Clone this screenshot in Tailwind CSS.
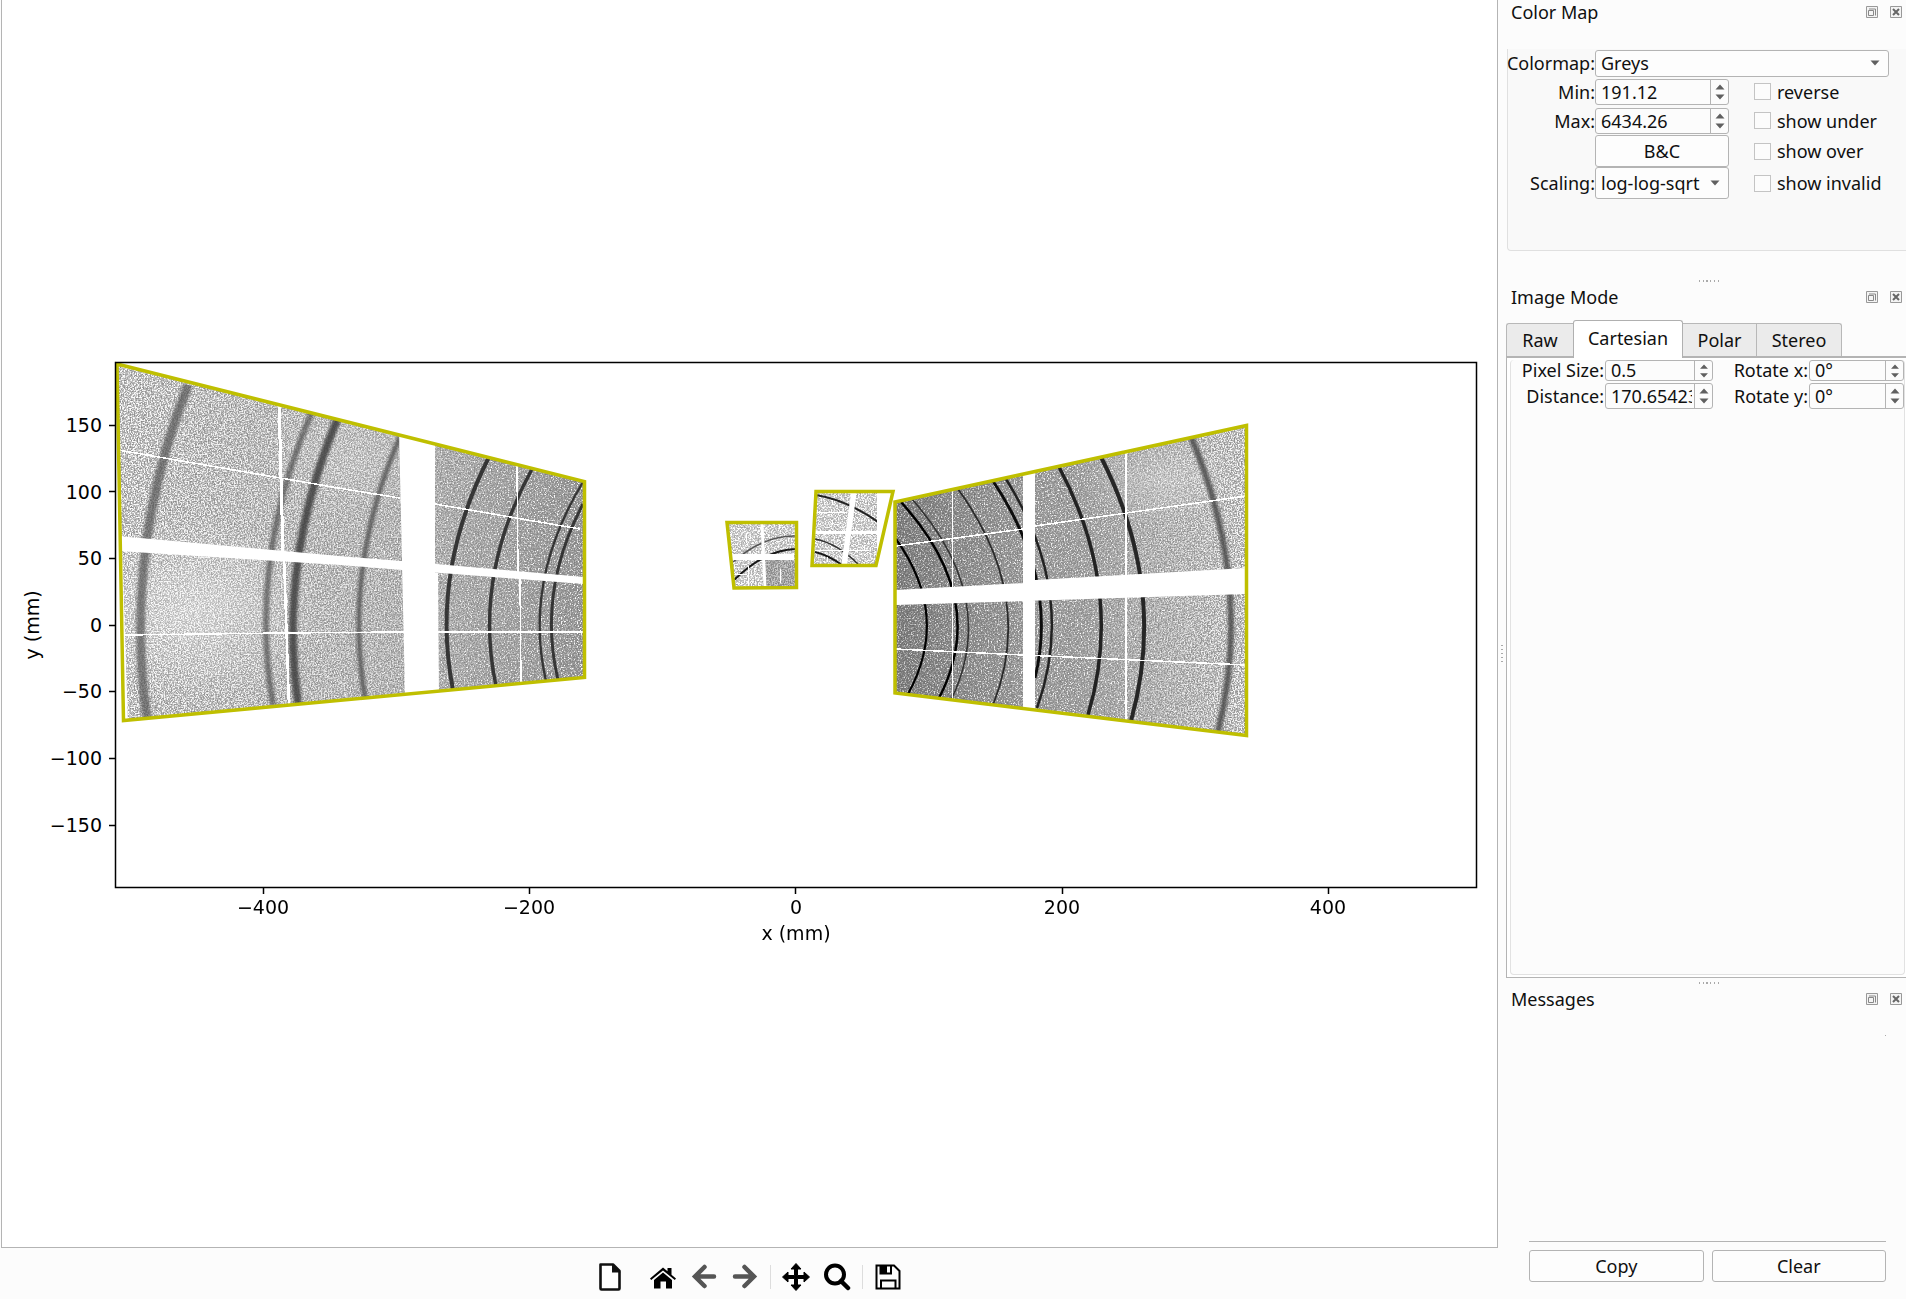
<!DOCTYPE html>
<html lang="en">
<head>
<meta charset="utf-8">
<title>Detector Viewer</title>
<script src="https://cdn.jsdelivr.net/npm/@tailwindcss/browser@4"></script>
</head>
<body class="flex h-screen overflow-hidden bg-[#fcfcfc] font-['Noto_Sans',sans-serif] text-[18px] leading-6 text-[#101010]">

<!-- Shared icon shapes -->
<svg class="hidden" aria-hidden="true">
  <symbol id="float" viewBox="0 0 12 12"><path d="M.5.5h11v11H.5z" fill="#f4f4f4" stroke="#999"/><path d="M3 3h6.500v6.500M2.500 4.500h5v5h-5z" fill="none" stroke="#888"/></symbol>
  <symbol id="close" viewBox="0 0 12 12"><path d="M.5.5h11v11H.5z" fill="#f4f4f4" stroke="#999"/><path d="M3 3l6 6M9 3l-6 6" stroke="#666" stroke-width="2"/></symbol>
  <symbol id="spin" viewBox="0 0 10 16"><path d="M.5 5.500L5 .5l4.500 5zM.5 10.500L5 15.500l4.500-5z" fill="#606060"/></symbol>
  <symbol id="drop" viewBox="0 0 10 6"><path d="M.5.5L5 5.500 9.500.5z" fill="#606060"/></symbol>
  <symbol id="grip" viewBox="0 0 21 2"><path d="M0 1h1m3 0h1m2 0h2m2 0h1m3 0h1m3 0h1" stroke="#aaa" stroke-width="2"/></symbol>
</svg>

<main class="flex min-w-0 flex-1 flex-col">
  <section class="ml-px min-h-0 flex-1 border-r border-b border-l border-[#b4b4b4] bg-white">
    <svg class="block h-full w-full" viewBox="2 0 1495 1247" role="img" aria-label="Detector images in Cartesian view">
      <defs>
        <filter id="noiseLight" x="0" y="0" width="1" height="1" color-interpolation-filters="sRGB">
          <feTurbulence type="fractalNoise" baseFrequency="0.7" numOctaves="3" seed="4"/>
          <feColorMatrix values="1 0 0 0 0  1 0 0 0 0  1 0 0 0 0  0 0 0 0 1"/>
          <feComponentTransfer>
            <feFuncR type="table" tableValues=".5 .5 .55 .63 .75 .98 1 1 1"/>
            <feFuncG type="table" tableValues=".5 .5 .55 .63 .75 .98 1 1 1"/>
            <feFuncB type="table" tableValues=".5 .5 .55 .63 .75 .98 1 1 1"/>
          </feComponentTransfer>
        </filter>
        <filter id="noiseDark" x="0" y="0" width="1" height="1" color-interpolation-filters="sRGB">
          <feTurbulence type="fractalNoise" baseFrequency="0.7" numOctaves="3" seed="9"/>
          <feColorMatrix values="1 0 0 0 0  1 0 0 0 0  1 0 0 0 0  0 0 0 0 1"/>
          <feComponentTransfer>
            <feFuncR type="table" tableValues=".42 .45 .5 .54 .58 .74 1 1 1"/>
            <feFuncG type="table" tableValues=".42 .45 .5 .54 .58 .74 1 1 1"/>
            <feFuncB type="table" tableValues=".42 .45 .5 .54 .58 .74 1 1 1"/>
          </feComponentTransfer>
        </filter>
        <filter id="soft" x="-20%" y="-5%" width="140%" height="110%"><feGaussianBlur stdDeviation="1.8 0"/></filter>
        <filter id="fine" x="-20%" y="-5%" width="140%" height="110%"><feGaussianBlur stdDeviation=".7 0"/></filter>
        <linearGradient id="fadeL"><stop offset="0" stop-color="#fff"/><stop offset=".55" stop-color="#aaa"/><stop offset=".68" stop-color="#777"/><stop offset="1" stop-color="#000"/></linearGradient>
        <linearGradient id="fadeR"><stop offset="0" stop-color="#000"/><stop offset=".5" stop-color="#222"/><stop offset=".66" stop-color="#666"/><stop offset="1" stop-color="#fff"/></linearGradient>
        <linearGradient id="shadeR"><stop offset="0" stop-opacity=".16"/><stop offset=".4" stop-opacity="0"/></linearGradient>
        <radialGradient id="glow"><stop offset="0" stop-color="#fff" stop-opacity=".38"/><stop offset="1" stop-color="#fff" stop-opacity="0"/></radialGradient>
        <mask id="maskL"><path d="M115 360h471v362H115z" fill="url(#fadeL)"/></mask>
        <mask id="maskR"><path d="M895 425h352v312H895z" fill="url(#fadeR)"/></mask>
        <clipPath id="clipL"><path d="M117 363L584 481V677L124 720z"/></clipPath>
        <clipPath id="clipA"><path d="M728 522H796V588H734z"/></clipPath>
        <clipPath id="clipB"><path d="M816 491H877V550L875 565H812z"/></clipPath>
        <clipPath id="clipR"><path d="M895 502L1246 426V736L895 693z"/></clipPath>
      </defs>

      <!-- Left panel -->
      <g clip-path="url(#clipL)">
        <rect x="115" y="360" width="471" height="362" filter="url(#noiseDark)"/>
        <g mask="url(#maskL)"><rect x="115" y="360" width="471" height="362" filter="url(#noiseLight)"/></g>
        <ellipse cx="195" cy="610" rx="125" ry="95" fill="url(#glow)"/>
        <ellipse cx="355" cy="460" rx="90" ry="60" fill="url(#glow)" opacity=".4"/>
        <g fill="none" filter="url(#soft)">
          <path d="M188 385Q123 551 147 718" stroke="#555" stroke-width="9" opacity=".72"/>
          <path d="M312 412Q248 559 273 705" stroke="#555" stroke-width="6" opacity=".75"/>
          <path d="M337 420Q278 562 298 703" stroke="#3c3c3c" stroke-width="8" opacity=".85"/>
          <path d="M400 437Q343 567 365 698" stroke="#555" stroke-width="5" opacity=".85"/>
        </g>
        <g fill="none" stroke="#2c2c2c" filter="url(#fine)" opacity=".9">
          <path d="M489 457Q430 574 453 690" stroke-width="4"/>
          <path d="M532 469Q473 577 496 686" stroke-width="3.500"/>
          <path d="M583 482Q523 581 546 681" stroke-width="2.400"/>
          <path d="M583 504Q537 591 558 680" stroke-width="3"/>
        </g>
        <g fill="#fff">
          <path d="M118 536L350 557 402 561 584 577V584L402 570 340 565 118 551z"/>
          <path d="M399 430L405 695H439L438 573H435V440z"/>
          <path d="M119 540L122 545 128 722H121z"/>
        </g>
        <g fill="none" stroke="#fff" shape-rendering="crispEdges">
          <path d="M118 450L350 490 400 498M435 504L580 529M124 635L283 633 403 632H584" stroke-width="1.500"/>
          <path d="M279 400L283 553" stroke-width="3"/><path d="M284 556L289 706" stroke-width="2.500"/>
          <path d="M517 464L518 574M520 576L521 685" stroke-width="1.500"/>
        </g>
      </g>

      <!-- Small centre panels -->
      <g clip-path="url(#clipA)">
        <rect x="725" y="520" width="73" height="70" filter="url(#noiseLight)"/>
        <path d="M725 520h73v70h-73z" fill="#fff" opacity=".2"/>
        <path d="M763 559h33v30h-33z" opacity=".2"/>
        <path d="M733 562Q764 535 796 536" fill="none" stroke="#555" stroke-width="1.500"/>
        <path d="M734 580Q764 550 796 549" fill="none" stroke="#181818" stroke-width="2"/>
        <g stroke="#fff" fill="none"><path d="M731 557h63" stroke-width="6"/><path d="M762 523L765 588" stroke-width="3"/><path d="M734 574.500h13M779.500 524v5M746.500 533v10M748.500 566v20M780.500 569v14"/></g>
      </g>
      <g clip-path="url(#clipB)">
        <rect x="810" y="490" width="70" height="77" filter="url(#noiseLight)"/>
        <path d="M810 490h70v77h-70z" fill="#fff" opacity=".2"/>
        <g fill="none"><path d="M816 495Q847 500 878 522" stroke="#222" stroke-width="2"/>
          <path d="M815 539Q837 543 859 565" stroke="#333" stroke-width="1.500"/><path d="M815 552Q828 555 842 565" stroke="#181818" stroke-width="2"/></g>
        <g stroke="#fff" fill="none"><path d="M812 532.500h66" stroke-width="3"/><path d="M854 491L844 566" stroke-width="5.500"/><path d="M816 512.500h31M815 550.500h54M832.500 500v5M832.500 520v5M827.500 557v5M864.500 545v4"/></g>
      </g>

      <!-- Right panel -->
      <g clip-path="url(#clipR)">
        <rect x="895" y="425" width="352" height="312" filter="url(#noiseDark)"/>
        <g mask="url(#maskR)"><rect x="895" y="425" width="352" height="312" filter="url(#noiseLight)"/></g>
        <path d="M895 425h352v312H895z" fill="url(#shadeR)"/>
        <ellipse cx="1160" cy="480" rx="80" ry="45" fill="url(#glow)" opacity=".6"/>
        <g fill="none" stroke="#000" filter="url(#fine)">
          <path d="M896 539Q951 616 908 694" stroke-width="2.200"/>
          <path d="M901 502Q990 600 939 698" stroke-width="2.500"/>
          <path d="M912 499Q999 598 952 698" stroke="#333" stroke-width="1.600"/>
          <path d="M958 489Q1036 597 993 705" stroke="#2a2a2a" stroke-width="1.800"/>
          <path d="M993 481Q1059 580 1035 678" stroke="#111" stroke-width="3"/>
          <path d="M1006 479Q1078 594 1037 708" stroke="#222" stroke-width="2.500"/>
          <path d="M1059 467Q1125 591 1088 715" stroke="#222" stroke-width="3.500"/>
          <path d="M1101 457Q1168 589 1131 721" stroke="#282828" stroke-width="4"/>
        </g>
        <path d="M1191 437Q1254 585 1218 732" fill="none" stroke="#484848" stroke-width="6" opacity=".85" filter="url(#soft)"/>
        <path d="M896 590L1023 583 1035 580 1246 568V594L896 605zM1023 460h12v255h-12z" fill="#fff"/>
        <g fill="none" stroke="#fff" shape-rendering="crispEdges">
          <path d="M896 546L1023 529M1035 526L1246 496M896 649L1023 655 1246 665" stroke-width="1.500"/>
          <path d="M952.500 480v230"/><path d="M1126 440v285" stroke-width="2"/>
        </g>
      </g>

      <!-- Panel outlines -->
      <g fill="none" stroke="#bfbf00" stroke-width="3.500">
        <path d="M117 364L584.500 481.500V677.500L123.500 720.500z"/>
        <path d="M727 522.500H796.500V587.500L734 588z"/>
        <path d="M816 491.500H893L876 565.500H812z"/>
        <path d="M895 502L1246.500 425.500V735.500L895 693z"/>
      </g>

      <!-- Axes -->
      <g fill="none" stroke="#000" stroke-width="1.500">
        <path d="M115.500 362.500H1476.500V887.500H115.500z"/>
        <path d="M263.500 888v6M529.500 888v6M795.500 888v6M1062.500 888v6M1328.500 888v6M115 425.500h-6M115 491.500h-6M115 558.500h-6M115 625.500h-6M115 691.500h-6M115 758.500h-6M115 825.500h-6"/>
      </g>
      <g class="font-['DejaVu_Sans',sans-serif] text-[19px]" fill="#000">
        <g text-anchor="middle">
          <text x="263" y="914">−400</text><text x="529" y="914">−200</text><text x="796" y="914">0</text><text x="1062" y="914">200</text><text x="1328" y="914">400</text>
          <text x="796" y="940">x (mm)</text>
          <text transform="translate(39 625) rotate(-90)">y (mm)</text>
        </g>
        <g text-anchor="end">
          <text x="102" y="432">150</text><text x="102" y="499">100</text><text x="102" y="565">50</text><text x="102" y="632">0</text><text x="102" y="698">−50</text><text x="102" y="765">−100</text><text x="102" y="832">−150</text>
        </g>
      </g>
    </svg>
  </section>

  <div class="flex h-[51px] shrink-0 items-center justify-center gap-[13px] pt-1.5" role="toolbar">
    <button class="mr-3 h-7 w-7" aria-label="New"><svg viewBox="0 0 28 28"><path d="M4.500 1.500H17L23.500 8V25.500a1 1 0 0 1-1 1h-17a1 1 0 0 1-1-1z" fill="#fff" stroke="#111" stroke-width="2.600" stroke-linejoin="round"/><path d="M16 1V9.500H24.500z" fill="#111"/></svg></button>
    <button class="h-7 w-7" aria-label="Home"><svg viewBox="0 0 28 28"><path d="M5 17L14 9.500 23 17V25.500H17V18.500H11.500V25.500H5zM1 15.500L14 4.500 18.500 8.300V5H22.500V11.700L27 15.500 25.800 17 14 7.500 2.200 17z"/></svg></button>
    <button class="h-7 w-7" aria-label="Back"><svg viewBox="0 0 28 28"><path d="M14.500 4L5 13.500 14.500 23M6 13.500H24" fill="none" stroke="#555" stroke-width="4.500" stroke-linecap="round"/></svg></button>
    <button class="h-7 w-7" aria-label="Forward"><svg viewBox="0 0 28 28"><path d="M13.500 4L23 13.500 13.500 23M22 13.500H4" fill="none" stroke="#555" stroke-width="4.500" stroke-linecap="round"/></svg></button>
    <span class="-mx-0.5 h-6 w-px bg-[#ddd]"></span>
    <button class="h-7 w-7" aria-label="Pan"><svg viewBox="0 0 28 28"><path d="M14 .5L19 6H15.500V12.500H22V9L27.500 14 22 19V15.500H15.500V22H19L14 27.500 9 22H12.500V15.500H6V19L.5 14 6 9V12.500H12.500V6H9z" stroke="#000" stroke-linejoin="round"/></svg></button>
    <button class="h-7 w-7" aria-label="Zoom"><svg viewBox="0 0 28 28" fill="none" stroke="#000"><circle cx="12" cy="11.500" r="9" stroke-width="4"/><path d="M18 18L25 25" stroke-width="4.500" stroke-linecap="round"/></svg></button>
    <span class="-mx-0.5 h-6 w-px bg-[#ddd]"></span>
    <button class="h-7 w-7" aria-label="Save"><svg viewBox="0 0 28 28" fill="none" stroke="#000" stroke-width="2"><path d="M2.500 2.500H20L25.500 8V25.500H2.500zM7 25V17.500H21.500V25"/><path d="M6.500 2.500V10.500H17V2.500"/><path d="M7 3h5v7H7z" fill="#000"/></svg></button>
  </div>
</main>

<!-- Splitter -->
<div class="flex w-2 shrink-0 items-center justify-center"><div class="mt-2 flex flex-col gap-[3px]"><i class="block h-px w-0.5 bg-[#aaa]"></i><i class="block h-px w-0.5 bg-[#aaa]"></i><i class="block h-px w-0.5 bg-[#aaa]"></i><i class="block h-px w-0.5 bg-[#aaa]"></i><i class="block h-px w-0.5 bg-[#aaa]"></i></div></div>

<aside class="flex w-[400px] shrink-0 flex-col">
  <section class="flex h-[280px] shrink-0 flex-col">
    <header class="flex h-6 items-center gap-3 pr-1 pl-[5px]">
      <h2 class="flex-1">Color Map</h2>
      <button aria-label="Float Color Map"><svg class="h-3 w-3"><use href="#float"/></svg></button>
      <button aria-label="Close Color Map"><svg class="h-3 w-3"><use href="#close"/></svg></button>
    </header>
    <div class="mt-[25px] ml-px grid h-[202px] grid-cols-[87px_134px_1fr] grid-rows-[28px_29px_29px_32px_32px] items-center rounded-bl-sm border-b border-l border-[#e0e0e0] bg-[#f9f9f9]">
      <label for="cmap" class="justify-self-end">Colormap:</label>
      <div class="relative col-span-2 mr-[17px]">
        <select id="cmap" class="block h-[27px] w-full appearance-none rounded-[3px] border border-[#b4b4b4] bg-[#fdfdfd] pl-[5px] leading-6"><option>Greys</option></select>
        <svg class="pointer-events-none absolute top-[10px] right-[9px] h-[6px] w-[10px]"><use href="#drop"/></svg>
      </div>

      <label for="min" class="justify-self-end">Min:</label>
      <div class="flex h-[26px] rounded-[3px] border border-[#b4b4b4] bg-[#fcfcfc]"><input id="min" value="191.12" class="min-w-0 flex-1 pl-[5px]"><span class="flex w-[18px] items-center justify-center border-l border-[#b4b4b4]"><svg class="h-4 w-[10px]"><use href="#spin"/></svg></span></div>
      <label class="ml-[25px] flex items-center gap-[6px]"><input type="checkbox" class="h-[17px] w-[17px] appearance-none border border-[#c4c4c4] bg-[#fcfcfc]">reverse</label>

      <label for="max" class="justify-self-end">Max:</label>
      <div class="flex h-[26px] rounded-[3px] border border-[#b4b4b4] bg-[#fcfcfc]"><input id="max" value="6434.26" class="min-w-0 flex-1 pl-[5px]"><span class="flex w-[18px] items-center justify-center border-l border-[#b4b4b4]"><svg class="h-4 w-[10px]"><use href="#spin"/></svg></span></div>
      <label class="ml-[25px] flex items-center gap-[6px]"><input type="checkbox" class="h-[17px] w-[17px] appearance-none border border-[#c4c4c4] bg-[#fcfcfc]">show under</label>

      <button class="col-start-2 h-8 rounded-[3px] border border-[#b4b4b4] bg-[#fdfdfd]">B&amp;C</button>
      <label class="ml-[25px] flex items-center gap-[6px]"><input type="checkbox" class="h-[17px] w-[17px] appearance-none border border-[#c4c4c4] bg-[#fcfcfc]">show over</label>

      <label for="scaling" class="justify-self-end">Scaling:</label>
      <div class="relative">
        <select id="scaling" class="block h-8 w-full appearance-none rounded-[3px] border border-[#b4b4b4] bg-[#fdfdfd] pl-[5px]"><option>log-log-sqrt</option></select>
        <svg class="pointer-events-none absolute top-[13px] right-[9px] h-[6px] w-[10px]"><use href="#drop"/></svg>
      </div>
      <label class="ml-[25px] flex items-center gap-[6px]"><input type="checkbox" class="h-[17px] w-[17px] appearance-none border border-[#c4c4c4] bg-[#fcfcfc]">show invalid</label>
    </div>
  </section>
  <svg class="ml-[193px] h-0.5 w-[21px] shrink-0"><use href="#grip"/></svg>

  <section class="mt-[3px] flex h-[693px] shrink-0 flex-col">
    <header class="flex h-6 items-center gap-3 pr-1 pl-[5px]">
      <h2 class="flex-1">Image Mode</h2>
      <button aria-label="Float Image Mode"><svg class="h-3 w-3"><use href="#float"/></svg></button>
      <button aria-label="Close Image Mode"><svg class="h-3 w-3"><use href="#close"/></svg></button>
    </header>
    <div class="mt-[11px] flex h-9 items-end" role="tablist">
      <button role="tab" class="h-[33px] w-[67px] rounded-tl-[3px] border-t border-l border-[#b8b8b8] bg-[#ebebeb]">Raw</button>
      <button role="tab" aria-selected="true" class="relative z-10 -mb-0.5 h-[38px] w-[110px] rounded-t-[3px] border-x border-t border-[#b0b0b0] bg-white pb-1">Cartesian</button>
      <button role="tab" class="h-[33px] w-[74px] border-t border-r border-[#b8b8b8] bg-[#ebebeb]">Polar</button>
      <button role="tab" class="h-[33px] w-[85px] rounded-tr-[3px] border-t border-r border-[#b8b8b8] bg-[#ebebeb]">Stereo</button>
    </div>
    <div class="flex min-h-0 flex-1 flex-col border-t-2 border-b border-l border-[#b4b4b4] bg-white pt-0.5 pr-px pb-0.5 pl-[3px]">
      <div class="grid flex-1 grid-cols-[94px_108px_96px_minmax(0,1fr)] content-start items-center gap-y-0.5 rounded-sm border-x border-b border-[#e2e2e2] bg-[#fcfcfc]">
        <label for="px" class="mr-px justify-self-end leading-[21px]">Pixel Size:</label>
        <div class="flex h-[21px] rounded-[3px] border border-[#b4b4b4] bg-[#fcfcfc]"><input id="px" value="0.5" class="h-[19px] min-w-0 flex-1 pl-[5px] leading-[19px]"><span class="flex w-[18px] items-center justify-center border-l border-[#b4b4b4]"><svg class="h-[14px] w-[10px]"><use href="#spin"/></svg></span></div>
        <label for="rx" class="mr-px justify-self-end leading-[21px]">Rotate x:</label>
        <div class="flex h-[21px] rounded-[3px] border border-[#b4b4b4] bg-[#fcfcfc]"><input id="rx" value="0°" class="h-[19px] min-w-0 flex-1 pl-[5px] leading-[19px]"><span class="flex w-[18px] items-center justify-center border-l border-[#b4b4b4]"><svg class="h-[14px] w-[10px]"><use href="#spin"/></svg></span></div>
        <label for="dist" class="mr-px justify-self-end">Distance:</label>
        <div class="flex h-[26px] rounded-[3px] border border-[#b4b4b4] bg-[#fcfcfc]"><input id="dist" value="170.65423" class="mr-0.5 ml-[5px] min-w-0 flex-1"><span class="flex w-[18px] items-center justify-center border-l border-[#b4b4b4]"><svg class="h-4 w-[10px]"><use href="#spin"/></svg></span></div>
        <label for="ry" class="mr-px justify-self-end">Rotate y:</label>
        <div class="flex h-[26px] rounded-[3px] border border-[#b4b4b4] bg-[#fcfcfc]"><input id="ry" value="0°" class="min-w-0 flex-1 pl-[5px]"><span class="flex w-[18px] items-center justify-center border-l border-[#b4b4b4]"><svg class="h-4 w-[10px]"><use href="#spin"/></svg></span></div>
      </div>
    </div>
  </section>
  <svg class="mt-1 ml-[193px] h-0.5 w-[21px] shrink-0"><use href="#grip"/></svg>

  <section class="mt-[3px] flex min-h-0 flex-1 flex-col pb-[17px]">
    <header class="flex h-6 items-center gap-3 pr-1 pl-[5px]">
      <h2 class="flex-1">Messages</h2>
      <button aria-label="Float Messages"><svg class="h-3 w-3"><use href="#float"/></svg></button>
      <button aria-label="Close Messages"><svg class="h-3 w-3"><use href="#close"/></svg></button>
    </header>
    <div class="mt-6 mr-5 ml-[23px] flex-1 border-b border-[#b4b4b4]"><i class="ml-auto block h-px w-px bg-[#aaa]"></i></div>
    <div class="mt-2 mr-5 ml-[23px] grid grid-cols-2 gap-2">
      <button class="h-8 rounded-[3px] border border-[#b4b4b4] bg-[#fdfdfd]">Copy</button>
      <button class="h-8 rounded-[3px] border border-[#b4b4b4] bg-[#fdfdfd]">Clear</button>
    </div>
  </section>
</aside>
</body>
</html>
